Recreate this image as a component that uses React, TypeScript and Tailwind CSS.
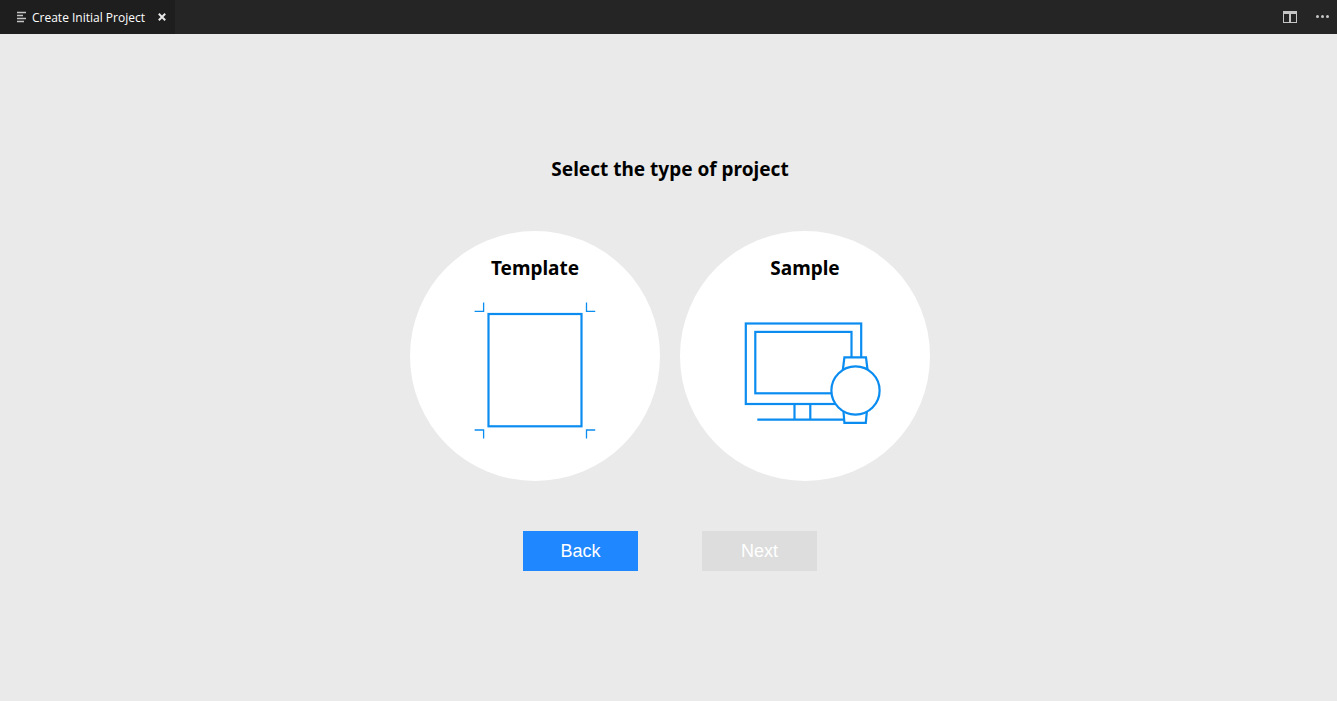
import type { ReactNode } from "react";

function TemplateIcon() {
  return (
    <svg width="122" height="138" viewBox="0 0 122 138" fill="none" stroke="#0a8cf0" aria-hidden="true">
      <rect x="14.5" y="12" width="93" height="112.3" strokeWidth="2.2" />
      <path
        d="M9.6 0.5V9.4H0.6 M112.5 0.5V9.4H121.2 M0.6 128H9.6V136.6 M121.2 128H112.5V136.6"
        strokeWidth="1.3"
      />
    </svg>
  );
}

function SampleIcon() {
  return (
    <svg width="152" height="138" viewBox="0 0 152 138" fill="none" stroke="#0a8cf0" strokeWidth="2.2" aria-hidden="true">
      <rect x="16.8" y="21.5" width="115.4" height="80.5" />
      <rect x="26.3" y="29.9" width="96.2" height="61.4" />
      <path d="M65.5 102V117.5 M81.3 102V117.5 M28.3 117.6H115" />
      <path d="M113.6 70L115.4 55.3H137L138.8 70Z" fill="white" />
      <path d="M114.2 106L115.4 120.9H136.8L138.2 106Z" fill="white" />
      <circle cx="126.5" cy="88.5" r="24.1" fill="white" />
    </svg>
  );
}

function ProjectType({ label, children }: { label: string; children: ReactNode }) {
  return (
    <button
      type="button"
      className="flex size-[250px] flex-col items-center rounded-full bg-white pt-[23px] text-[19px] leading-7 font-bold"
    >
      <span className="mb-5">{label}</span>
      {children}
    </button>
  );
}

export default function App() {
  return (
    <div className="flex min-h-screen flex-col bg-[#eaeaea] font-['Noto_Sans','Open_Sans',sans-serif] text-black">
      <header className="flex h-[34px] items-stretch justify-between bg-[#252526]">
        <div className="flex items-center bg-[#1e1e1e] pr-[5px] pl-4 text-white">
          <svg width="12" height="12" viewBox="0 0 12 12" stroke="#c5c5c5" strokeWidth="1.4" className="mr-1" aria-hidden="true">
            <path d="M1 1.5H10 M1 4.5H7 M1 7.5H10 M1 10.5H8" />
          </svg>
          <span className="pt-px font-['Open_Sans',sans-serif] text-[12px] font-medium">Create Initial Project</span>
          <button type="button" aria-label="Close tab" className="ml-[9px] p-1">
            <svg width="8" height="8" viewBox="0 0 8 8" stroke="#e8e8e8" strokeWidth="2" aria-hidden="true">
              <path d="M0.8 0.8L7.2 7.2M7.2 0.8L0.8 7.2" />
            </svg>
          </button>
        </div>
        <div className="flex items-center gap-[17px] pr-2">
          <button type="button" aria-label="Split editor">
            <svg width="16" height="12" viewBox="0 0 16 12" aria-hidden="true">
              <path fill="#c5c5c5" fillRule="evenodd" d="M1 0H15V12H1ZM2 3V11H7V3ZM9 3V11H14V3Z" />
            </svg>
          </button>
          <button type="button" aria-label="More actions">
            <svg width="14" height="4" viewBox="0 0 14 4" fill="#c5c5c5" aria-hidden="true">
              <circle cx="2.5" cy="1.5" r="1.5" />
              <circle cx="7.5" cy="1.5" r="1.5" />
              <circle cx="12.5" cy="1.5" r="1.5" />
            </svg>
          </button>
        </div>
      </header>
      <main className="flex grow flex-col items-center pt-[121px] pl-[3px]">
        <h1 className="text-[19px] leading-7 font-bold">Select the type of project</h1>
        <div className="mt-12 flex gap-5">
          <ProjectType label="Template">
            <TemplateIcon />
          </ProjectType>
          <ProjectType label="Sample">
            <SampleIcon />
          </ProjectType>
        </div>
        <div className="mt-[50px] flex gap-16 font-['Liberation_Sans',sans-serif] text-lg text-white">
          <button type="button" className="h-10 w-[115px] bg-[#1f87ff]">
            Back
          </button>
          <button type="button" disabled className="h-10 w-[115px] bg-[#dddddd]">
            Next
          </button>
        </div>
      </main>
    </div>
  );
}
